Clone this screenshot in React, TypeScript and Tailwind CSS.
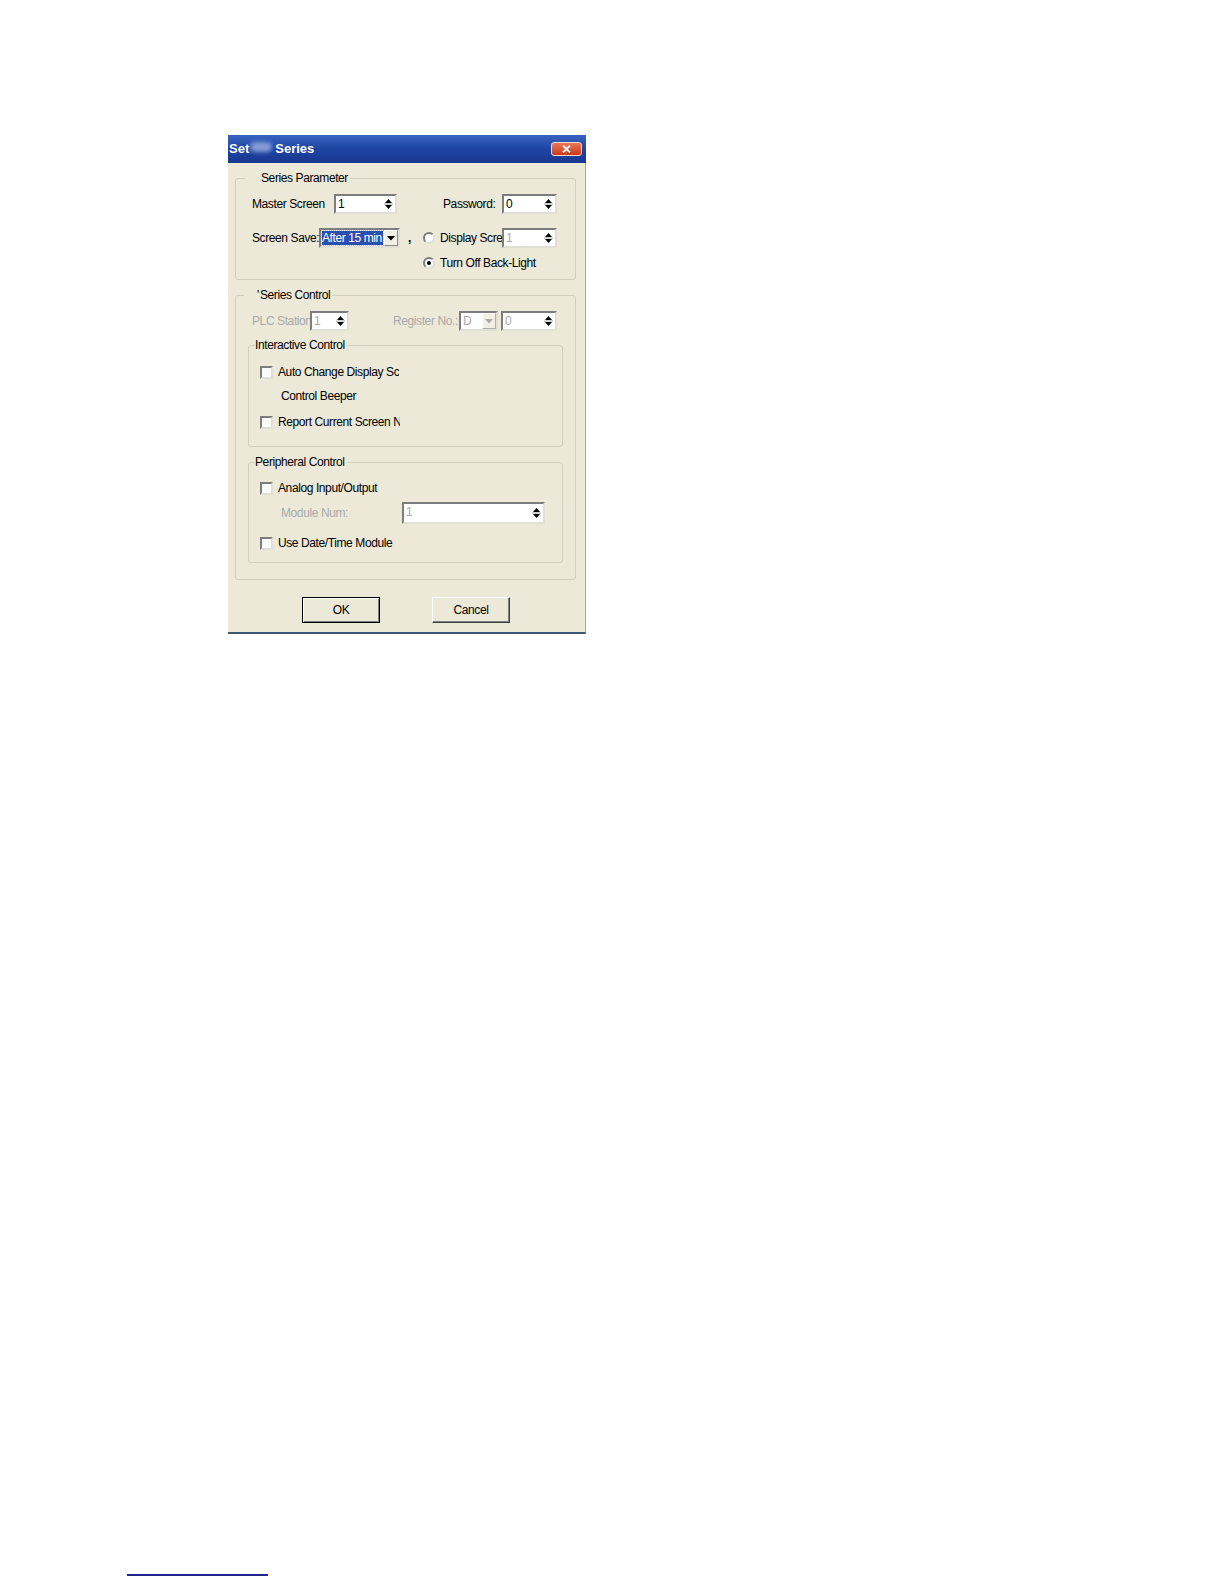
import React from 'react';

const sunken =
  'border-2 border-t-[#7d7d7d] border-l-[#7d7d7d] border-r-[#e2e0d6] border-b-[#e2e0d6]';

function SpinArrows({ color = '#000' }: { color?: string }) {
  return (
    <svg width="9" height="14" viewBox="0 0 9 14">
      <path d="M1 6 L4.5 2 L8 6 Z" fill={color} />
      <path d="M0 7 H9" stroke="#a5a396" strokeWidth="1" />
      <path d="M1 8 L8 8 L4.5 12 Z" fill={color} />
    </svg>
  );
}

function DownArrow({ color = '#000' }: { color?: string }) {
  return (
    <svg width="8" height="5" viewBox="0 0 8 5">
      <path d="M0 0 H8 L4 4.5 Z" fill={color} />
    </svg>
  );
}

function SpinBox({ value, width, dim }: { value: string; width: string; dim?: boolean }) {
  return (
    <div className={`flex h-full items-stretch bg-white ${sunken} ${width}`}>
      <span className={`flex-1 pl-[2px] leading-[16px] ${dim ? 'text-[#a9a9a9]' : 'text-black'}`}>
        {value}
      </span>
      <span className="flex w-[14px] items-center justify-center">
        <SpinArrows />
      </span>
    </div>
  );
}

function Check() {
  return <span className={`block h-[13px] w-[13px] shrink-0 bg-[#fbfbf8] ${sunken}`} />;
}

function Radio({ checked }: { checked?: boolean }) {
  return (
    <span
      className={`flex h-[12px] w-[12px] shrink-0 items-center justify-center rounded-full bg-white ${sunken}`}
    >
      {checked && <span className="block h-[4px] w-[4px] rounded-full bg-black" />}
    </span>
  );
}

function GroupBox({
  legend,
  legendClass,
  className = '',
  children,
}: {
  legend: React.ReactNode;
  legendClass: string;
  className?: string;
  children: React.ReactNode;
}) {
  return (
    <fieldset className={`rounded-[3px] border border-[#d0cebf] ${className}`}>
      <legend className={`leading-[14px] ${legendClass}`}>{legend}</legend>
      {children}
    </fieldset>
  );
}

function TitleBar() {
  return (
    <div className="flex h-[28px] items-center bg-gradient-to-b from-[#3a63c0] via-[#1e44a2] to-[#183890] pl-[1px] pr-[4px] text-[13px] font-bold tracking-normal text-white">
      <span>Set</span>
      <span className="mx-[1px] block h-[10px] w-[22px] -translate-y-[2px] rounded-full bg-[#8ea6da] opacity-90 blur-[2px]" />
      <span className="ml-[2px]">Series</span>
      <span className="ml-auto flex h-[14px] w-[31px] items-center justify-center rounded-[3px] border border-[#f3d6cc] bg-gradient-to-b from-[#ec7656] to-[#c8381a]">
        <svg width="9" height="8" viewBox="0 0 9 8">
          <path d="M1 0.5 L8 7.5 M8 0.5 L1 7.5" stroke="#fff" strokeWidth="1.8" />
        </svg>
      </span>
    </div>
  );
}

function SeriesParameter() {
  return (
    <GroupBox legend="Series Parameter" legendClass="ml-[9px] pl-[16px] pr-[2px]">
      <div className="pl-[16px] pt-[9px] pb-[8px]">
        <div className="flex h-[20px] items-center">
          <span className="w-[82px]">Master Screen</span>
          <SpinBox value="1" width="w-[63px]" />
          <span className="ml-[46px] w-[59px]">Password:</span>
          <SpinBox value="0" width="w-[55px]" />
        </div>
        <div className="mt-[14px] flex h-[20px] items-center">
          <span className="w-[67px] whitespace-nowrap">Screen Save:</span>
          <div className={`flex h-full w-[81px] items-stretch bg-white ${sunken}`}>
            <span className="m-[1px] flex-1 overflow-hidden whitespace-nowrap bg-[#2a4fae] leading-[14px] text-white outline-1 outline-dotted outline-[#d9c98c]">
              After 15 min
            </span>
            <span className="flex w-[14px] items-center justify-center border border-t-white border-l-white border-r-[#8a8a80] border-b-[#8a8a80] bg-[#f1efe6]">
              <DownArrow />
            </span>
          </div>
          <span className="w-[23px] pl-[8px] font-bold leading-[12px]">,</span>
          <Radio />
          <span className="ml-[5px] w-[62px] overflow-hidden whitespace-nowrap">Display Screen</span>
          <SpinBox value="1" width="w-[55px]" dim />
        </div>
        <div className="mt-[7px] flex h-[16px] items-center pl-[171px]">
          <Radio checked />
          <span className="ml-[5px] whitespace-nowrap">Turn Off Back-Light</span>
        </div>
      </div>
    </GroupBox>
  );
}

function SeriesControl() {
  return (
    <GroupBox
      className="mt-[8px]"
      legend={
        <>
          <span className="mr-[1px]">'</span>Series Control
        </>
      }
      legendClass="ml-[8px] pl-[13px] pr-[2px]"
    >
      <div className="px-[12px] pt-[9px] pb-[16px]">
        <div className="flex h-[20px] items-center pl-[4px] text-[#a9a9a9]">
          <span className="w-[58px] overflow-hidden whitespace-nowrap">PLC Station</span>
          <SpinBox value="1" width="w-[39px]" dim />
          <span className="ml-[44px] w-[66px] whitespace-nowrap">Register No.:</span>
          <div className={`flex h-full w-[39px] items-stretch bg-white ${sunken}`}>
            <span className="flex-1 pl-[2px] leading-[16px]">D</span>
            <span className="flex w-[14px] items-center justify-center border border-t-white border-l-white border-r-[#b0aea4] border-b-[#b0aea4] bg-[#f1efe6]">
              <DownArrow color="#a9a9a9" />
            </span>
          </div>
          <span className="ml-[3px] h-full">
            <SpinBox value="0" width="w-[56px]" dim />
          </span>
        </div>

        <GroupBox className="mt-[7px]" legend="Interactive Control" legendClass="ml-[6px] pr-[2px]">
          <div className="pl-[11px] pt-[12px] pb-[16px]">
            <div className="flex h-[16px] items-center">
              <Check />
              <span className="ml-[5px] w-[121px] overflow-hidden whitespace-nowrap">
                Auto Change Display Screen
              </span>
            </div>
            <div className="mt-[8px] flex h-[16px] items-center pl-[21px]">Control Beeper</div>
            <div className="mt-[10px] flex h-[16px] items-center">
              <Check />
              <span className="ml-[5px] w-[122px] overflow-hidden whitespace-nowrap">
                Report Current Screen No.
              </span>
            </div>
          </div>
        </GroupBox>

        <GroupBox className="mt-[8px]" legend="Peripheral Control" legendClass="ml-[6px] pr-[2px]">
          <div className="pl-[11px] pt-[11px] pb-[11px]">
            <div className="flex h-[16px] items-center">
              <Check />
              <span className="ml-[5px] whitespace-nowrap">Analog Input/Output</span>
            </div>
            <div className="mt-[6px] flex h-[22px] items-center pl-[21px]">
              <span className="w-[121px] text-[#a9a9a9]">Module Num:</span>
              <SpinBox value="1" width="w-[143px]" dim />
            </div>
            <div className="mt-[11px] flex h-[16px] items-center">
              <Check />
              <span className="ml-[5px] whitespace-nowrap">Use Date/Time Module</span>
            </div>
          </div>
        </GroupBox>
      </div>
    </GroupBox>
  );
}

function Buttons() {
  return (
    <div className="mt-[17px] flex">
      <button className="ml-[67px] flex h-[26px] w-[78px] items-center justify-center border border-black bg-[#ece9d8] shadow-[inset_1px_1px_0_#ffffff,inset_-1px_-1px_0_#808080]">
        OK
      </button>
      <button className="ml-[52px] flex h-[26px] w-[78px] items-center justify-center border border-t-white border-l-white border-r-[#404040] border-b-[#404040] bg-[#ece9d8] shadow-[inset_-1px_-1px_0_#808080]">
        Cancel
      </button>
    </div>
  );
}

function Dialog() {
  return (
    <div className="w-[358px]">
      <TitleBar />
      <div className="border-r border-b-2 border-r-[#a9a9a0] border-b-[#3d5877] bg-[#ece9d8] pt-[8px] pr-[9px] pb-[9px] pl-[7px]">
        <SeriesParameter />
        <SeriesControl />
        <Buttons />
      </div>
    </div>
  );
}

export default function App() {
  return (
    <div className="min-h-[1584px] bg-white font-['Liberation_Sans',Arial,sans-serif] text-[12px] tracking-[-0.4px] text-black">
      <div className="h-[1574px] pt-[135px] pl-[228px]">
        <Dialog />
      </div>
      <div className="ml-[127px] h-[2px] w-[141px] bg-[#23238e]" />
    </div>
  );
}
